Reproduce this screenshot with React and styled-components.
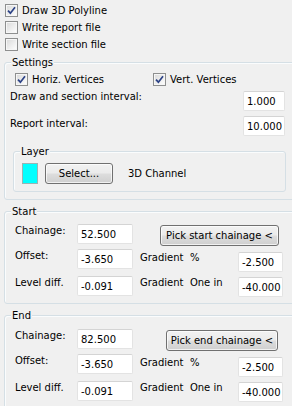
import React from "react";
import styled, { createGlobalStyle } from "styled-components";

const GlobalStyle = createGlobalStyle`
  html, body {
    margin: 0;
    padding: 0;
    background: #f0f0f0;
  }
  body {
    font-family: "DejaVu Sans", "Liberation Sans", sans-serif;
    font-size: 10px;
    color: #000;
  }
`;

const Dialog = styled.div`
  width: 292px;
  height: 406px;
  overflow: hidden;
  background: #f0f0f0;
`;

// top check boxes
const CheckList = styled.div`
  display: flex;
  flex-direction: column;
  padding: 2px 0 0 5px;
`;

const CheckRow = styled.label`
  display: flex;
  align-items: center;
  gap: 4px;
  height: 17px;
  width: ${p => (p.$width ? `${p.$width}px` : "auto")};
  line-height: 13px;
  white-space: nowrap;
`;

const Box = styled.span`
  box-sizing: border-box;
  width: 13px;
  height: 13px;
  flex: none;
  display: inline-flex;
  align-items: center;
  justify-content: center;
  border: 1px solid #8e8f8f;
  background: linear-gradient(135deg, #d8d8d8 0%, #eeeeee 55%, #ffffff 100%);
  box-shadow: inset 0 0 0 1px #f6f6f6;
`;

function Check({ checked, children, width }) {
  return (
    <CheckRow $width={width}>
      <Box>
        {checked && (
          <svg width="9" height="9" viewBox="0 0 9 9">
            <path
              d="M1 4.6 L3.4 7.2 L8 1.2"
              fill="none"
              stroke="#2c4286"
              strokeWidth="1.7"
            />
          </svg>
        )}
      </Box>
      {children}
    </CheckRow>
  );
}

// group boxes
const Group = styled.div`
  position: relative;
  box-sizing: border-box;
  width: ${p => p.$width || 300}px;
  margin: ${p => p.$top}px 0 0 ${p => p.$left}px;
  padding: ${p => p.$padTop}px 0 ${p => p.$padBottom}px 0;
  border: 1px solid #d5dfe5;
  border-radius: 3px;
  box-shadow: inset 1px 1px 0 #fafcfd;
`;

const Legend = styled.span`
  position: absolute;
  top: -7px;
  left: 6px;
  padding: 0 1px;
  line-height: 13px;
  background: #f0f0f0;
`;

const VertexRow = styled.div`
  display: flex;
  padding-left: 10px;
`;

const IntervalRow = styled.div`
  display: flex;
  align-items: flex-start;
  margin-top: ${p => p.$top}px;
  padding: 0 18px 0 5px;
`;

const Text = styled.span`
  line-height: 13px;
  margin-top: ${p => p.$top || 0}px;
  white-space: pre;
`;

const Grow = styled(Text)`
  flex: 1;
`;

const Field = styled.div`
  box-sizing: border-box;
  width: ${p => p.$width}px;
  height: 20px;
  flex: none;
  margin-top: ${p => p.$top || 0}px;
  padding: 0 3px;
  display: flex;
  align-items: center;
  background: #fff;
  border: 1px solid #e3e3e3;
  border-top-color: #d4d4d4;
  border-radius: 2px;
  line-height: 13px;
`;

const LayerRow = styled.div`
  display: flex;
  align-items: center;
  padding-left: 8px;
`;

const Swatch = styled.div`
  box-sizing: border-box;
  width: 16px;
  height: 21px;
  background: #00ffff;
  border: 1px solid #9ab3b3;
`;

const Button = styled.div`
  box-sizing: border-box;
  width: ${p => p.$width}px;
  height: 21px;
  flex: none;
  margin: ${p => p.$margin || 0};
  display: flex;
  align-items: center;
  justify-content: center;
  border: 1px solid #707070;
  border-radius: 3px;
  background: linear-gradient(#f2f2f2 0%, #ebebeb 48%, #dddddd 52%, #cfcfcf 100%);
  box-shadow: inset 0 0 0 1px rgba(255, 255, 255, 0.7);
  line-height: 13px;
  white-space: nowrap;
`;

const Channel = styled.span`
  margin-left: 15px;
  line-height: 13px;
`;

// chainage sections
const Row = styled.div`
  display: flex;
  align-items: flex-start;
  height: ${p => p.$height}px;
  padding-left: 10px;
`;

const Label = styled(Text)`
  width: 62px;
  flex: none;
`;

const Label2 = styled(Text)`
  width: 98px;
  flex: none;
  margin-left: 7px;
`;

function Section({ title, top, padTop, chainage, pick, pickWidth, pickLeft }) {
  return (
    <Group $top={top} $left={4} $padTop={padTop} $padBottom={6}>
      <Legend>{title}</Legend>
      <Row $height={25}>
        <Label>Chainage:</Label>
        <Field $width={56}>{chainage}</Field>
        <Button $width={pickWidth} $margin={`1px 0 0 ${pickLeft}px`}>
          {pick}
        </Button>
      </Row>
      <Row $height={27}>
        <Label>Offset:</Label>
        <Field $width={56}>-3.650</Field>
        <Label2 $top={2}>Gradient  %</Label2>
        <Field $width={45} $top={3}>-2.500</Field>
      </Row>
      <Row $height={21}>
        <Label>Level diff.</Label>
        <Field $width={56}>-0.091</Field>
        <Label2>Gradient  One in</Label2>
        <Field $width={45} $top={1}>-40.000</Field>
      </Row>
    </Group>
  );
}

export default function App() {
  return (
    <Dialog>
      <GlobalStyle />
      <CheckList>
        <Check checked>Draw 3D Polyline</Check>
        <Check>Write report file</Check>
        <Check>Write section file</Check>
      </CheckList>

      <Group $top={9} $left={4} $padTop={8} $padBottom={7}>
        <Legend>Settings</Legend>
        <VertexRow>
          <Check checked width={138}>Horiz. Vertices</Check>
          <Check checked>Vert. Vertices</Check>
        </VertexRow>
        <IntervalRow $top={3}>
          <Grow $top={-1}>Draw and section interval:</Grow>
          <Field $width={42}>1.000</Field>
        </IntervalRow>
        <IntervalRow $top={5}>
          <Grow $top={1}>Report interval:</Grow>
          <Field $width={42}>10.000</Field>
        </IntervalRow>
        <Group $top={15} $left={8} $width={273} $padTop={11} $padBottom={7}>
          <Legend>Layer</Legend>
          <LayerRow>
            <Swatch />
            <Button $width={68} $margin="0 0 0 7px">Select...</Button>
            <Channel>3D Channel</Channel>
          </LayerRow>
        </Group>
      </Group>

      <Section
        title="Start"
        top={11}
        padTop={12}
        chainage="52.500"
        pick="Pick start chainage <"
        pickWidth={119}
        pickLeft={27}
      />
      <Section
        title="End"
        top={11}
        padTop={13}
        chainage="82.500"
        pick="Pick end chainage <"
        pickWidth={112}
        pickLeft={33}
      />
    </Dialog>
  );
}
